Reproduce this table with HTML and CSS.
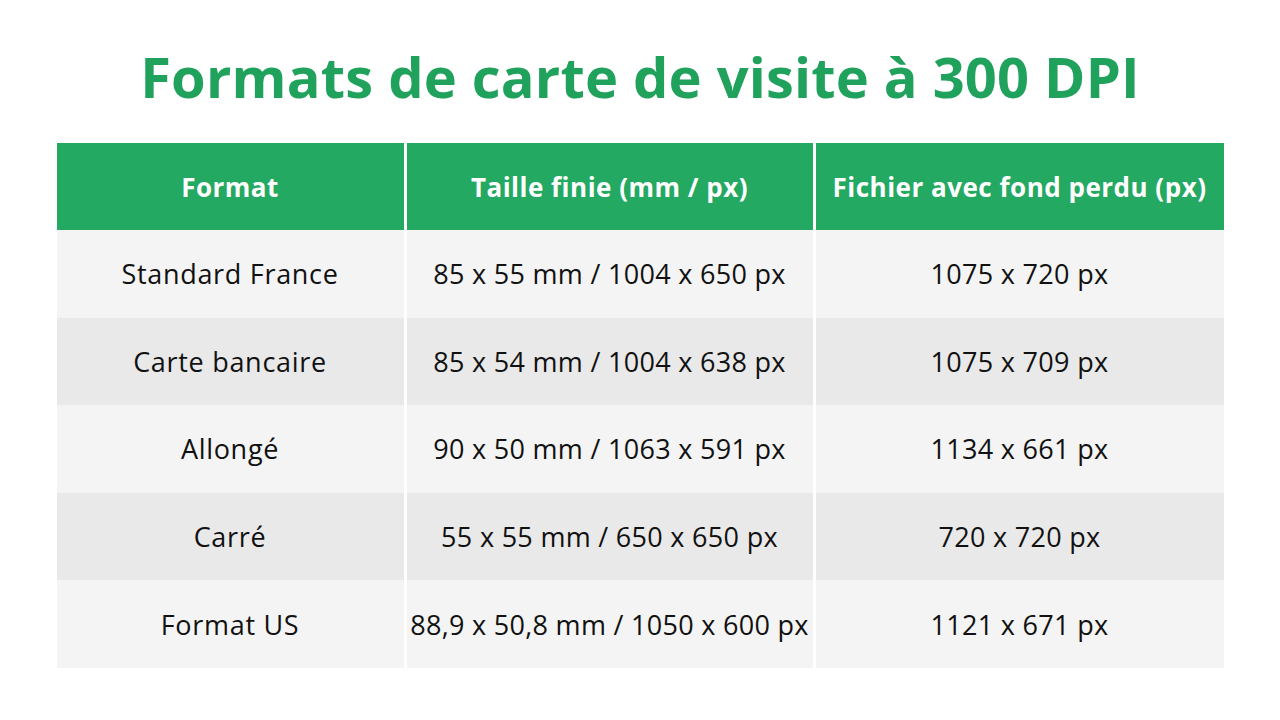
FILE: index.html
```html
<!DOCTYPE html>
<html lang="fr">
<head>
<meta charset="utf-8">
<title>Formats de carte de visite à 300 DPI</title>
<link rel="stylesheet" href="styles.css">
</head>
<body>
<main class="page">
  <h1 class="title">Formats de carte de visite à 300 DPI</h1>
  <div class="table">
    <div class="cell head">Format</div>
    <div class="cell head">Taille finie (mm / px)</div>
    <div class="cell head">Fichier avec fond perdu (px)</div>

    <div class="cell light name">Standard France</div>
    <div class="cell light">85 x 55 mm / 1004 x 650 px</div>
    <div class="cell light">1075 x 720 px</div>

    <div class="cell dark name">Carte bancaire</div>
    <div class="cell dark">85 x 54 mm / 1004 x 638 px</div>
    <div class="cell dark">1075 x 709 px</div>

    <div class="cell light name">Allongé</div>
    <div class="cell light">90 x 50 mm / 1063 x 591 px</div>
    <div class="cell light">1134 x 661 px</div>

    <div class="cell dark name">Carré</div>
    <div class="cell dark">55 x 55 mm / 650 x 650 px</div>
    <div class="cell dark">720 x 720 px</div>

    <div class="cell light name">Format US</div>
    <div class="cell light">88,9 x 50,8 mm / 1050 x 600 px</div>
    <div class="cell light">1121 x 671 px</div>
  </div>
</main>
</body>
</html>
```

FILE: styles.css
```css
html, body {
  margin: 0;
  padding: 0;
  background: #ffffff;
}
body {
  font-family: "Open Sans", "Liberation Sans", sans-serif;
  color: #111111;
}
.page {
  width: 1280px;
  height: 720px;
  display: flex;
  flex-direction: column;
  align-items: center;
}
.title {
  margin: 48px 0 39px 0;
  height: 56px;
  font-size: 56px;
  line-height: 56px;
  font-weight: 700;
  color: #20a25d;
  letter-spacing: 0.2px;
  white-space: nowrap;
}
.table {
  display: grid;
  grid-template-columns: 347px 406px 408px;
  grid-template-rows: 87px repeat(5, 87.6px);
  column-gap: 3px;
  width: 1167px;
}
.cell {
  display: flex;
  align-items: center;
  justify-content: center;
  font-size: 27px;
  letter-spacing: 0.3px;
  white-space: nowrap;
}
.name {
  letter-spacing: 0.7px;
}
.head {
  background: #23a961;
  color: #ffffff;
  font-weight: 700;
  font-size: 26px;
  letter-spacing: 0.5px;
}
.light {
  background: #f4f4f4;
}
.dark {
  background: #e9e9e9;
}
```
